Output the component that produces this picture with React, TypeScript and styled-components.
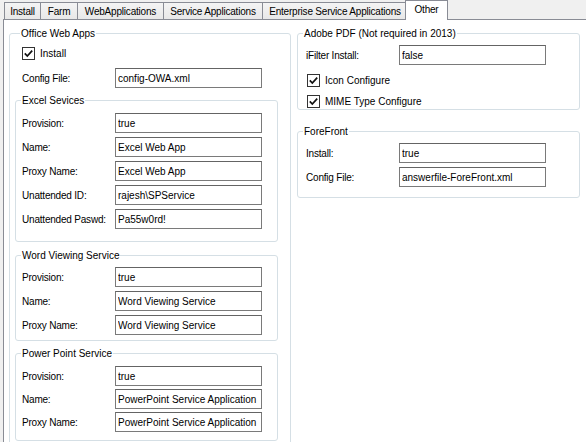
import React from 'react';
import styled, { createGlobalStyle } from 'styled-components';

const Global = createGlobalStyle`
  html, body { margin: 0; padding: 0; background: #f0f0f0; }
  body {
    width: 586px; height: 442px; overflow: hidden;
    font-family: "Liberation Sans", Arial, sans-serif;
    font-size: 10px; color: #000;
  }
`;

const Window = styled.div`
  width: 586px;
  height: 442px;
  overflow: hidden;
  display: flex;
  flex-direction: column;
  background: #f0f0f0;
`;

const TabStrip = styled.div`
  display: flex;
  align-items: flex-end;
  height: 22px;
  padding-left: 4px;
  position: relative;
  z-index: 1;
`;

const Tab = styled.div<{ $w: number; $active?: boolean }>`
  box-sizing: border-box;
  width: ${(p) => p.$w}px;
  height: ${(p) => (p.$active ? 20 : 17)}px;
  margin-left: ${(p) => (p.$active ? -3 : -1)}px;
  margin-right: ${(p) => (p.$active ? -2 : 0)}px;
  margin-bottom: ${(p) => (p.$active ? -1 : 0)}px;
  padding-bottom: ${(p) => (p.$active ? 3 : 0)}px;
  &:first-child { margin-left: 0; }
  border: 1px solid #898c95;
  border-bottom: none;
  background: ${(p) => (p.$active ? '#ffffff' : 'linear-gradient(#f4f4f4, #e8e8e8)')};
  display: flex;
  align-items: center;
  justify-content: center;
  white-space: nowrap;
  letter-spacing: -0.2px;
  position: relative;
  z-index: ${(p) => (p.$active ? 2 : 0)};
  font-size: 10px;
`;

const TabPage = styled.div`
  flex: 1;
  margin-left: 3px;
  width: 600px;
  background: #fff;
  border: 1px solid #898c95;
  padding: 7px 0 0 5px;
  display: grid;
  grid-template-columns: 282px 283px;
  column-gap: 6px;
  align-items: start;
`;

const Column = styled.div`
  display: flex;
  flex-direction: column;
`;

const Group = styled.fieldset<{ $pad: string; $mt?: number }>`
  margin: ${(p) => p.$mt ?? 0}px 0 0 0;
  min-width: 0;
  border: 1px solid #d5dfe5;
  border-radius: 3px;
  padding: ${(p) => p.$pad};
  display: flex;
  flex-direction: column;
`;

const Caption = styled.legend`
  padding: 0 1px;
  margin-left: 5px;
  line-height: 13px;
  font-size: 10px;
  white-space: nowrap;
`;

const Row = styled.div<{ $inset: number; $mt?: number }>`
  display: flex;
  align-items: center;
  height: 20px;
  padding-left: ${(p) => p.$inset}px;
  margin-top: ${(p) => p.$mt ?? 0}px;
`;

const CheckRow = styled.label<{ $inset: number; $mt?: number }>`
  display: flex;
  align-items: center;
  gap: 5px;
  height: 16px;
  padding-left: ${(p) => p.$inset}px;
  margin-top: ${(p) => p.$mt ?? 0}px;
`;

const Label = styled.span`
  width: 93px;
  flex: none;
  letter-spacing: -0.2px;
  white-space: nowrap;
`;

const TextBox = styled.input`
  box-sizing: border-box;
  width: 147px;
  height: 20px;
  margin: 0;
  border: 1px solid #7a7a7a;
  border-top-color: #646464;
  padding: 0 0 0 2px;
  font-family: "Liberation Sans", Arial, sans-serif;
  font-size: 10px;
  color: #000;
  background: #fff;
  outline: none;
`;

const Box = styled.span`
  box-sizing: border-box;
  width: 13px;
  height: 13px;
  flex: none;
  border: 1px solid #333;
  background: #fff;
  display: flex;
  align-items: center;
  justify-content: center;
`;

const Check = () => (
  <Box>
    <svg width="11" height="11" viewBox="0 0 11 11">
      <path d="M1.8 5.4 L4.3 8 L9.2 2.6" fill="none" stroke="#111" strokeWidth="1.7" />
    </svg>
  </Box>
);

type FieldProps = { label: string; value: string; inset: number; mt?: number };
const Field = ({ label, value, inset, mt }: FieldProps) => (
  <Row $inset={inset} $mt={mt}>
    <Label>{label}</Label>
    <TextBox readOnly value={value} />
  </Row>
);

const tabs: { name: string; w: number; active?: boolean }[] = [
  { name: 'Install', w: 37 },
  { name: 'Farm', w: 38 },
  { name: 'WebApplications', w: 87 },
  { name: 'Service Applications', w: 100 },
  { name: 'Enterprise Service Applications', w: 146 },
  { name: 'Other', w: 43, active: true },
];

export default function App() {
  return (
    <Window>
      <Global />
      <TabStrip>
        {tabs.map((t) => (
          <Tab key={t.name} $w={t.w} $active={t.active}>
            {t.name}
          </Tab>
        ))}
      </TabStrip>
      <TabPage>
        <Column>
          <Group $pad="5px 12px 20px 5px">
            <Caption>Office Web Apps</Caption>
            <CheckRow $inset={7}>
              <Check />
              Install
            </CheckRow>
            <Field label="Config File:" value="config-OWA.xml" inset={7} mt={7} />
            <Group $pad="6px 0 12px 0" $mt={6}>
              <Caption>Excel Sevices</Caption>
              <Field label="Provision:" value="true" inset={6} />
              <Field label="Name:" value="Excel Web App" inset={6} mt={4} />
              <Field label="Proxy Name:" value="Excel Web App" inset={6} mt={4} />
              <Field label="Unattended ID:" value="rajesh\SPService" inset={6} mt={4} />
              <Field label="Unattended Paswd:" value="Pa55w0rd!" inset={6} mt={4} />
            </Group>
            <Group $pad="5px 0 5px 0" $mt={7}>
              <Caption>Word Viewing Service</Caption>
              <Field label="Provision:" value="true" inset={6} />
              <Field label="Name:" value="Word Viewing Service" inset={6} mt={4} />
              <Field label="Proxy Name:" value="Word Viewing Service" inset={6} mt={4} />
            </Group>
            <Group $pad="6px 0 8px 0" $mt={6}>
              <Caption>Power Point Service</Caption>
              <Field label="Provision:" value="true" inset={6} />
              <Field label="Name:" value="PowerPoint Service Application" inset={6} mt={3} />
              <Field label="Proxy Name:" value="PowerPoint Service Application" inset={6} mt={3} />
            </Group>
          </Group>
        </Column>
        <Column>
          <Group $pad="5px 0 0 0">
            <Caption>Adobe PDF (Not required in 2013)</Caption>
            <Field label="iFilter Install:" value="false" inset={8} />
            <CheckRow $inset={9} $mt={7}>
              <Check />
              Icon Configure
            </CheckRow>
            <CheckRow $inset={9} $mt={5}>
              <Check />
              MIME Type Configure
            </CheckRow>
          </Group>
          <Group $pad="5px 0 10px 0" $mt={15}>
            <Caption>ForeFront</Caption>
            <Field label="Install:" value="true" inset={8} />
            <Field label="Config File:" value="answerfile-ForeFront.xml" inset={8} mt={4} />
          </Group>
        </Column>
      </TabPage>
    </Window>
  );
}
